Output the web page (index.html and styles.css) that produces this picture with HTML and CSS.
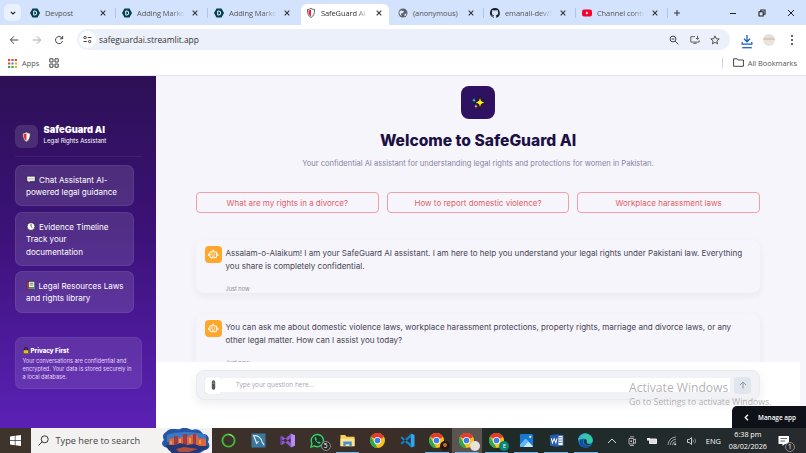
FILE: index.html
```html
<!DOCTYPE html>
<html lang="en">
<head>
  <meta charset="UTF-8">
  <meta name="viewport" content="width=device-width, initial-scale=1.0">
  <title>SafeGuard AI</title>
  <link rel="stylesheet" href="styles.css">
</head>
<body>
  <!-- shared icons -->
  <svg class="defs" width="0" height="0">
    <symbol id="close" viewBox="0 0 6 6"><path d="M.7.7l4.6 4.6M5.3.7L.7 5.3" fill="none" stroke="#333" stroke-width="1.1"/></symbol>
    <symbol id="devpost" viewBox="0 0 20 20"><path d="M5 1h10l5 9-5 9H5l-5-9z" fill="#003e54"/><path d="M7.500 6h2a4 4 0 0 1 0 8h-2z" fill="none" stroke="#fff" stroke-width="2"/></symbol>
    <symbol id="shield" viewBox="0 0 20 24"><path d="M10 1c3 2 5 2.500 8.500 2.500 0 10-1.500 15-8.500 19.500C3 18.500 1.500 13.500 1.500 3.500 5 3.500 7 3 10 1z" fill="#fff" stroke="#333" stroke-width="1.800"/><path d="M10 3.500C8 5 6 5.500 3.800 5.500c0 8 1.200 11.500 6.200 15z" fill="#e8283e"/></symbol>
    <symbol id="bot" viewBox="0 0 16 16"><g fill="none" stroke="#fff" stroke-width="1"><rect x="4.700" y="5.500" width="6.600" height="5.800" rx="1.600"/><path d="M8 5.300V4.200M3.500 7.600v2M12.500 7.600v2M6.700 9.800h2.600"/></g><g fill="#fff"><circle cx="6.700" cy="7.800" r=".7"/><circle cx="9.300" cy="7.800" r=".7"/><circle cx="8" cy="4.200" r=".8"/></g></symbol>
    <symbol id="chrome" viewBox="0 0 24 24"><circle cx="12" cy="12" r="12" fill="#fbc116"/><path d="M12 12L1.600 6A12 12 0 0 1 22.400 6z" fill="#e33b2e"/><path d="M1.600 6L7 15l5 9A12 12 0 0 1 1.600 6z" fill="#2da94f"/><path d="M12 6h10.400L12 12z" fill="#e33b2e"/><circle cx="12" cy="12" r="5.800" fill="#fff"/><circle cx="12" cy="12" r="4.500" fill="#3b7ded"/></symbol>
  </svg>

  <!-- tab strip -->
  <div class="tabstrip">
    <div class="tab-search"><svg width="6" height="4" viewBox="0 0 6 4"><path d="M.8.8L3 3 5.200.8" fill="none" stroke="#222" stroke-width="1.100"/></svg></div>
    <div class="tab line"><svg class="fav"><use href="#devpost"/></svg><span class="tab-title">Devpost</span><svg class="x"><use href="#close"/></svg></div>
    <div class="tab line"><svg class="fav"><use href="#devpost"/></svg><span class="tab-title fade">Adding Marko</span><svg class="x"><use href="#close"/></svg></div>
    <div class="tab"><svg class="fav"><use href="#devpost"/></svg><span class="tab-title fade">Adding Marko</span><svg class="x"><use href="#close"/></svg></div>
    <div class="tab active"><svg class="fav"><use href="#shield"/></svg><span class="tab-title fade">SafeGuard AI</span><svg class="x"><use href="#close"/></svg></div>
    <div class="tab line"><svg class="fav" viewBox="0 0 20 20"><circle cx="10" cy="10" r="9" fill="#5f6368"/><path d="M3 7c4-4 6 0 9-1l-2 4-4 1 1 5c-3-2-5-5-4-9zM13 12l4-1c0 3-2 5-4 6z" fill="#dce7f8"/></svg><span class="tab-title">(anonymous)</span><svg class="x"><use href="#close"/></svg></div>
    <div class="tab line"><svg class="fav" viewBox="0 0 16 16"><path fill="#1b1f23" d="M8 0a8 8 0 0 0-2.500 15.600c.4.100.5-.2.500-.4v-1.500c-2.200.5-2.700-1-2.700-1-.4-.9-.9-1.200-.9-1.200-.7-.5.100-.5.100-.5.800.1 1.200.8 1.200.8.700 1.200 1.900.9 2.300.7.100-.5.300-.9.500-1.100-1.800-.2-3.600-.9-3.600-4 0-.8.300-1.500.8-2.100-.1-.2-.4-1 .1-2.100 0 0 .7-.2 2.200.8a7.500 7.500 0 0 1 4 0c1.500-1 2.200-.8 2.200-.8.400 1.100.2 1.900.1 2.100.5.600.8 1.300.8 2.100 0 3.100-1.900 3.800-3.600 4 .3.300.5.700.5 1.500v2.200c0 .2.100.5.500.4A8 8 0 0 0 8 0z"/></svg><span class="tab-title fade">emanali-dev/S</span><svg class="x"><use href="#close"/></svg></div>
    <div class="tab line"><svg class="fav" viewBox="0 0 20 20"><rect y="3" width="20" height="14" rx="4" fill="#f5002f"/><path d="M8 7l5 3-5 3z" fill="#fff"/></svg><span class="tab-title fade">Channel conte</span><svg class="x"><use href="#close"/></svg></div>
    <svg class="new-tab" viewBox="0 0 8 8"><path d="M4 1v6M1 4h6" stroke="#333" stroke-width="1"/></svg>
    <div class="win-buttons">
      <svg width="8" height="8" viewBox="0 0 8 8"><path d="M1 4.500h6" stroke="#222"/></svg>
      <svg width="8" height="8" viewBox="0 0 8 8"><path d="M1 2.800h4.200V7H1zM2.800 2.500V1H7v4.300H5.500" fill="none" stroke="#222" stroke-width="1.100"/></svg>
      <svg width="8" height="8" viewBox="0 0 8 8"><path d="M1 1l6 6M7 1L1 7" stroke="#222"/></svg>
    </div>
  </div>

  <!-- address bar -->
  <div class="toolbar">
    <svg class="nav" viewBox="0 0 10 10"><path d="M9.200 5H1.500M5 1.300L1.300 5 5 8.700" fill="none" stroke="#444"/></svg>
    <svg class="nav" viewBox="0 0 10 10"><path d="M.8 5h7.700M5 1.300L8.700 5 5 8.700" fill="none" stroke="#aaa"/></svg>
    <svg class="nav" viewBox="0 0 10 10"><path d="M8.400 3.600A3.600 3.600 0 1 0 8.600 6M8.700 1v2.800H5.900" fill="none" stroke="#444"/></svg>
    <div class="omnibox">
      <span class="site-info"><svg width="9" height="9" viewBox="0 0 9 9"><g fill="none" stroke="#444" stroke-width="1"><circle cx="2" cy="2.500" r="1.200"/><path d="M4.700 2.500h3.800M.5 6.500h3.300"/><circle cx="6.700" cy="6.500" r="1.200"/></g></svg></span>
      <span class="url">safeguardai.streamlit.app</span>
      <svg viewBox="0 0 10 10"><g fill="none" stroke="#444"><circle cx="4" cy="4" r="2.900"/><path d="M6.200 6.200L9.400 9.400M2.700 4h2.600"/></g></svg>
      <svg viewBox="0 0 12 10"><path d="M6 1H1v6.500h10V5.500M4 9h4M9 0v4M7.200 2.600L9 4.300l1.800-1.700" fill="none" stroke="#444"/></svg>
      <svg viewBox="0 0 10 10"><path d="M5 .9l1.200 2.800 3 .2-2.300 2 .7 3L5 7.300 2.400 8.900l.7-3-2.300-2 3-.2z" fill="none" stroke="#444" stroke-width=".9"/></svg>
    </div>
    <svg class="download" viewBox="0 0 11 14"><path d="M5.500 1v6M2.700 4.500l2.800 2.800 2.800-2.800M1 7.500v2h9v-2" fill="none" stroke="#1b5fc4" stroke-width="1.200"/><path d="M1 12.800h9" stroke="#1b5fc4" stroke-width="1.200"/></svg>
    <div class="profile"></div>
    <svg class="dots" viewBox="0 0 4 12"><g fill="#333"><circle cx="2" cy="2" r="1"/><circle cx="2" cy="6" r="1"/><circle cx="2" cy="10" r="1"/></g></svg>
  </div>

  <div class="bookmarks">
    <svg width="9" height="9" viewBox="0 0 9 9"><path d="M0 1h2.200M0 4.500h2.200" stroke="#e04838" stroke-width="2"/><path d="M3.400 1h2.200M6.800 1H9" stroke="#e04838" stroke-width="2"/><path d="M0 8h2.200M3.400 8h2.200" stroke="#34a853" stroke-width="2"/><path d="M3.400 4.500h2.200" stroke="#4285f4" stroke-width="2"/><path d="M6.800 4.500H9M6.800 8H9" stroke="#f4b400" stroke-width="2"/></svg>
    <span class="apps">Apps</span>
    <svg width="10" height="10" viewBox="0 0 10 10"><path d="M.8.8H4V4H.8zM6 .8h3.200V4H6zM.8 6H4v3.200H.8zM6 6h3.200v3.200H6z" fill="none" stroke="#444"/></svg>
    <div class="all">
      <svg width="11" height="9" viewBox="0 0 11 9"><path d="M.6.8h3.600l1 1.200h5.200v6.300H.6z" fill="none" stroke="#444"/></svg>
      <span>All Bookmarks</span>
    </div>
  </div>

  <div class="app">
    <aside class="sidebar">
      <div class="brand">
        <div class="brand-icon"><svg width="9" height="12"><use href="#shield"/></svg></div>
        <div>
          <div class="brand-name">SafeGuard AI</div>
          <div class="brand-sub">Legal Rights Assistant</div>
        </div>
      </div>
      <nav class="menu">
        <div class="menu-item"><svg class="emoji" viewBox="0 0 10 10"><path d="M.5 1.500h9v5.500H4L2 9V7H.5z" fill="#fff" stroke="#222" stroke-width=".6"/><path d="M2.400 4.300h1M4.500 4.300h1M6.600 4.300h1" stroke="#222"/></svg>Chat Assistant AI-<br>powered legal guidance</div>
        <div class="menu-item"><svg class="emoji" viewBox="0 0 10 10"><circle cx="5" cy="5" r="4.300" fill="#fff" stroke="#222" stroke-width=".7"/><path d="M5 2v3l1.500 1.200" fill="none" stroke="#222" stroke-width=".8"/></svg>Evidence Timeline<br>Track your<br>documentation</div>
        <div class="menu-item"><svg class="emoji books" viewBox="0 0 10 10"><rect x=".6" y="1" width="3" height="8.400" fill="#e0443a" stroke="#222" stroke-width=".5"/><rect x="2.500" y=".6" width="6.500" height="6.500" fill="#f3f3e6" stroke="#222" stroke-width=".5"/><path d="M3.500 2.500h4M3.500 4.500h4" stroke="#3a8c50"/><path d="M3 8h6.500" stroke="#49a85c" stroke-width="1.800"/></svg>Legal Resources Laws<br>and rights library</div>
      </nav>
      <div class="privacy">
        <div class="privacy-title"><svg width="6" height="7" viewBox="0 0 6 7"><path d="M1.500 3V1.800a1.500 1.500 0 0 1 3 0V3" fill="none" stroke="#222"/><rect x=".4" y="3" width="5.200" height="3.700" fill="#f7b928" stroke="#222" stroke-width=".4"/></svg>Privacy First</div>
        <p>Your conversations are confidential and<br>encrypted. Your data is stored securely in<br>a local database.</p>
      </div>
    </aside>

    <main class="main">
      <div class="scroll">
        <div class="hero">
          <div class="hero-icon"><svg width="15" height="15" viewBox="0 0 15 15"><path d="M9 .8l1.300 4.900 4 1.800-4 1.800L9 14.200 7.700 9.300l-4-1.800 4-1.800z" fill="#ffef21" stroke="#111" stroke-width=".9"/><path d="M3 2.500l.8 2 1.700.8-1.700.8-.8 2-.8-2L.5 5.300l1.700-.8z" fill="#35c1f1" stroke="#111" stroke-width=".5"/><path d="M5 8.800l.8 1.700 1.400.7-1.400.7-.8 1.800-.8-1.800-1.400-.7 1.400-.7z" fill="#f59aaa" stroke="#111" stroke-width=".5"/></svg></div>
          <h1>Welcome to SafeGuard AI</h1>
          <p>Your confidential AI assistant for understanding legal rights and protections for women in Pakistan.</p>
        </div>
        <div class="prompts">
          <button>What are my rights in a divorce?</button>
          <button>How to report domestic violence?</button>
          <button>Workplace harassment laws</button>
        </div>
        <div class="message">
          <svg class="avatar" viewBox="0 0 16 16"><use href="#bot"/></svg>
          <div class="text">Assalam-o-Alaikum! I am your SafeGuard AI assistant. I am here to help you understand your legal rights under Pakistani law. Everything<br>you share is completely confidential.<div class="time">Just now</div></div>
        </div>
        <div class="message">
          <svg class="avatar" viewBox="0 0 16 16"><use href="#bot"/></svg>
          <div class="text">You can ask me about domestic violence laws, workplace harassment protections, property rights, marriage and divorce laws, or any<br>other legal matter. How can I assist you today?<div class="time">Just now</div></div>
        </div>
      </div>
      <div class="bottom">
        <div class="chat-input">
          <div class="mic"><svg width="5" height="10" viewBox="0 0 5 10"><rect x=".8" y=".3" width="3.400" height="9.400" rx="1.600" fill="#555"/><path d="M1.500 2h2M1.500 3.500h2" stroke="#aaa" stroke-width=".6"/></svg></div>
          <div class="field">Type your question here...</div>
          <div class="send"><svg width="8" height="8" viewBox="0 0 8 8"><path d="M4 7.500V1M1 4l3-3 3 3" fill="none" stroke="#8f93a5" stroke-width="1"/></svg></div>
        </div>
      </div>
    </main>
    <div class="manage"><svg width="5" height="7" viewBox="0 0 5 7"><path d="M4 .7L1.200 3.500 4 6.300" fill="none" stroke="#fff" stroke-width="1.300"/></svg><span>Manage app</span></div>
    <div class="activate"><div class="activate-title">Activate Windows</div><div class="activate-sub">Go to Settings to activate Windows.</div></div>
  </div>

  <div class="taskbar">
    <div class="start"><svg width="11" height="11" viewBox="0 0 11 11"><path d="M0 1.500l4.800-.7v4.400H0zM5.500.7L11 0v5.200H5.500zM0 5.900h4.800v4.400L0 9.600zM5.500 5.900H11V11l-5.500-.7z" fill="#fff"/></svg></div>
    <div class="search">
      <svg width="11" height="11" viewBox="0 0 11 11"><g fill="none" stroke="#333"><circle cx="6.700" cy="4.300" r="3.500"/><path d="M4.200 6.800L.6 10.400"/></g></svg>
      <span>Type here to search</span>
      <svg class="city" width="50" height="25" viewBox="0 0 50 25"><path d="M4 4C8-1 14 2 18 1c5-3 9 0 12 1 6-2 9 1 11 4 5 0 7 4 5 8 3 4 1 7-3 8l-5 3H10l-4-5c-7-1-7-6-4-8-2-4-1-6 2-8z" fill="#2456a5"/><path d="M5 7c8-4 30-4 39 0v7H5z" fill="#3d78c4"/><path d="M7 11l5-1V8h4v2l5-1V6h4v3l6-3v3l5-2v3l8 1v8H7z" fill="#d9673c"/><path d="M12 8h4v9h-4zM21 6h4v11h-4zM31 6h3v11h-3z" fill="#963d4c"/><path d="M4 17h10l4-2 7 2 7-1 6 2h8c0 3-3 4-6 4l-4 3H10c-2-2-6-5-6-8z" fill="#233675"/><path d="M14 21l8-2 14 2-9 3H17z" fill="#b04e40"/><path d="M9 13v3M18 11v4M28 10v5M38 12v4" stroke="#f0a868" stroke-width="1.500"/></svg>
    </div>
    <div class="task"><svg viewBox="0 0 16 16"><circle cx="8" cy="8" r="6.500" fill="none" stroke="#43b836" stroke-width="2"/><path d="M8 1.500a6.500 6.500 0 0 1 5 3" fill="none" stroke="#a8e68c" stroke-width="1"/></svg></div>
    <div class="task"><svg viewBox="0 0 16 16"><rect x=".5" y=".5" width="15" height="15" fill="#3a789f"/><path d="M2 3c5-1 9 2 10 7l2 3M3 3l3 8 2-2" fill="none" stroke="#d8eaf4" stroke-width="1.300"/></svg></div>
    <div class="task"><svg viewBox="0 0 16 16"><path d="M11.500.5L16 2.500v11l-4.500 2z" fill="#b88cf0"/><path d="M.5 4L2 3l10 8v4.500L.5 5.500zM.5 12L2 13l10-8V.500L.5 10.500z" fill="#8d58d2"/><path d="M.3 4v8L2 13V3z" fill="#6d3bb0"/></svg></div>
    <div class="task"><svg viewBox="0 0 16 16"><path d="M1 15l1-4a6.500 6.500 0 1 1 2.700 2.800z" fill="#263129" stroke="#35d366" stroke-width="1.500"/><path d="M5.500 4.500c-2 2 2.500 7 5 7l1-1.500-2-1-1 .8-2-2 .7-1L6.500 4.500z" fill="#35d366"/></svg><span class="badge">5</span></div>
    <div class="task open"><svg viewBox="0 0 16 16"><path d="M.5 2h5l1.500 2h8.500v10H.5z" fill="#f8cf57"/><path d="M.5 6h15v8H.5z" fill="#ffe391"/><path d="M3.500 14V9h9v5h-2.500v-2H6v2z" fill="#4394cc"/></svg></div>
    <div class="task"><svg><use href="#chrome"/></svg></div>
    <div class="task"><svg viewBox="0 0 16 16"><path d="M11.500.5L15.500 2v12l-4 1.500z" fill="#31a7ef"/><path d="M.5 5L2 3.800l10 8v3.700zM.5 11L2 12.200l10-8V.5z" fill="#1284cb"/></svg></div>
    <div class="task open"><svg><use href="#chrome"/></svg><span class="badge person"></span></div>
    <div class="task open current"><svg><use href="#chrome"/></svg><span class="badge pale"></span></div>
    <div class="task open"><svg><use href="#chrome"/></svg><span class="badge teal">E</span></div>
    <div class="task open"><svg viewBox="0 0 16 16"><rect x="1" y="1" width="14" height="14" rx="1.500" fill="#1978d4"/><path d="M1 13l6-7 8 8-1 1H2z" fill="#c6e8ff"/><path d="M1 13l6-7 3 3-5 6H2z" fill="#62b7f5"/><circle cx="12" cy="4" r="1.200" fill="#fff"/></svg></div>
    <div class="task open"><svg viewBox="0 0 16 16"><rect x="7" y="2.500" width="8" height="11" fill="#fff" stroke="#295aa8"/><path d="M10 5h4M10 7.500h4M10 10h4" stroke="#295aa8" stroke-width=".8"/><path d="M1 2.500L10 1v14l-9-1.500z" fill="#2459ad"/><path d="M2.500 5.700l1.200 4.800 1.800-4.500 1.800 4.500 1.200-4.800" fill="none" stroke="#fff" stroke-width="1.100"/></svg></div>
    <div class="task open"><svg viewBox="0 0 16 16"><circle cx="8" cy="8" r="7.800" fill="#1677cc"/><path d="M.3 7A7.800 7.800 0 0 1 15.800 8c0 4-5 4-6.500 2.500 1.500-3-1-5-4-4.500-2 .2-4 .5-5 2z" fill="#39c6a4"/><path d="M.3 7A7.800 7.800 0 0 1 8 .2C4 3 3 5 .3 7z" fill="#36a8e0"/><path d="M6 7c-3 4 1 8 7 6-5 5-12 1-11-4 .5-2 2-3 4-2z" fill="#0d4f9c"/><path d="M7 7c3 0 2 2 2 3.500 1 1.500 3 2 5 1-1 2-7 2-7.500-1.500C6.300 9 6.300 8 7 7z" fill="#26323a"/></svg></div>
    <div class="tray">
      <svg viewBox="0 0 10 10"><path d="M1 7l4-4 4 4" fill="none" stroke="#ddd"/></svg>
      <svg viewBox="0 0 10 10"><path d="M3 .8h4M3 9.500h4M2 2.500h4.500v5.500H2zM6.500 4l2-1v4.500l-2-1" fill="none" stroke="#ccc" stroke-width=".8"/><circle cx="4.200" cy="5.200" r=".9" fill="#ccc"/></svg>
      <svg viewBox="0 0 10 10"><path d="M2.500 3h7v4.500h-7z" fill="#ddd" stroke="#eee"/><path d="M0 2h3v2.500H0z" fill="#eee"/></svg>
      <svg viewBox="0 0 10 10"><path d="M1 9a8 8 0 0 1 8-8M3.300 9A5.700 5.700 0 0 1 9 3.300M5.600 9A3.400 3.400 0 0 1 9 5.600" fill="none" stroke="#aaa" stroke-width=".9"/><circle cx="8.200" cy="8.300" r="1" fill="#ddd"/></svg>
      <svg viewBox="0 0 10 10"><path d="M.5 3.500h1.700L4.500 1.500v7L2.200 6.500H.5z" fill="none" stroke="#ddd" stroke-width=".9"/><path d="M6 3.500q1 1.500 0 3M7.800 2.500q1.500 2.500 0 5" fill="none" stroke="#999" stroke-width=".8"/></svg>
    </div>
    <span class="lang">ENG</span>
    <div class="clock"><div>6:38 pm</div><div>08/02/2026</div></div>
    <div class="notify"><svg width="12" height="12" viewBox="0 0 12 12"><path d="M.5 1h10.500v8H7L4.500 11V9h-4z" fill="#fff"/><path d="M2.500 3.500H9M2.500 6H7" stroke="#444" stroke-width=".8"/></svg><span class="badge">1</span></div>
  </div>
</body>
</html>
```
FILE: styles.css
```css
* { box-sizing: border-box; }
body {
  margin: 0;
  width: 806px;
  height: 453px;
  overflow: hidden;
  display: flex;
  flex-direction: column;
  font-family: Inter, "Liberation Sans", sans-serif;
  background: #fff;
}
svg { flex: none; display: block; }
.defs { position: absolute; }

/* browser */
.tabstrip, .toolbar, .bookmarks {
  display: flex;
  align-items: center;
  flex: none;
  font-family: "Open Sans", "Noto Sans", sans-serif;
  color: #555;
}
.tabstrip {
  height: 25px;
  background: #d3e2fd;
  padding-left: 4px;
}
.tab-search {
  width: 17px;
  height: 17px;
  border-radius: 5px;
  background: #e9f1fe;
  display: flex;
  align-items: center;
  justify-content: center;
  margin-right: 3px;
}
.tab {
  width: 92px;
  height: 25px;
  padding: 1px 10px 0 6px;
  display: flex;
  align-items: center;
  position: relative;
}
.tab.line::after {
  content: "";
  position: absolute;
  right: 0;
  top: 8px;
  width: 1px;
  height: 10px;
  background: #a9c7f7;
}
.tab.active::before {
  content: "";
  position: absolute;
  z-index: 0;
  left: 1px;
  right: 3px;
  top: 4px;
  bottom: 0;
  background: #fff;
  border-radius: 6px 6px 0 0;
}
.tab > * { position: relative; }
.fav { width: 10px; height: 10px; }
.tab-title {
  font-size: 7.500px;
  line-height: 12px;
  letter-spacing: -0.1px;
  margin-left: 5px;
  width: 49px;
  white-space: nowrap;
}
.active .tab-title { color: #333; }
.fade {
  -webkit-mask-image: linear-gradient(to right, #000 70%, transparent 98%);
  mask-image: linear-gradient(to right, #000 70%, transparent 98%);
}
.x { width: 6px; height: 6px; margin-left: auto; }
.new-tab { width: 8px; height: 8px; margin-left: 5px; }
.win-buttons {
  display: flex;
  gap: 21px;
  margin-left: auto;
  padding-right: 11px;
}
.toolbar {
  height: 29px;
  padding: 0 12px 0 9px;
}
.nav { width: 10px; height: 10px; margin-right: 12.500px; }
.omnibox {
  width: 653.500px;
  height: 21px;
  border-radius: 11px;
  background: #ebf0fa;
  display: flex;
  align-items: center;
  gap: 10.500px;
  padding: 0 10px 0 2px;
}
.omnibox svg { width: 10px; height: 10px; }
.site-info {
  width: 17px;
  height: 17px;
  border-radius: 50%;
  background: #fff;
  display: flex;
  align-items: center;
  justify-content: center;
}
.site-info svg { width: 9px; height: 9px; }
.url {
  font-size: 8.400px;
  color: #333;
  margin-left: -7px;
  flex: 1;
}
.download { width: 12px; height: 15px; margin-left: 11px; margin-top: 3px; }
.profile {
  width: 12px;
  height: 12px;
  border-radius: 50%;
  background: linear-gradient(#e4e0d8 35%, #ddc6ca 36% 50%, #e9e6d9 51%);
  margin-left: auto;
}
.dots { width: 4px; height: 12px; margin-left: 15px; }
.bookmarks {
  height: 22px;
  padding: 0 9px 4px 8px;
  border-bottom: 1px solid #e6e8ee;
  font-size: 7.400px;
}
.apps { width: 17px; margin: 0 10px 0 5px; white-space: nowrap; }
.bookmarks > svg { margin-top: 1px; }
.all {
  margin-left: auto;
  display: flex;
  align-items: center;
  gap: 4px;
  border-left: 1px solid #c5d8f8;
  padding-left: 10px;
  height: 10px;
}

/* app */
.app {
  height: 352px;
  flex: none;
  display: flex;
  position: relative;
}
.sidebar {
  width: 156px;
  background: linear-gradient(#2d1055, #3b1278 45%, #5b21b6);
  color: #fff;
  padding: 47px 14.500px 0;
}
.brand {
  display: flex;
  gap: 6px;
  height: 34px;
  border-bottom: 1px solid rgba(255, 255, 255, 0.06);
}
.brand-icon {
  width: 23px;
  height: 23px;
  border-radius: 6px;
  background: rgba(255, 255, 255, 0.12);
  display: flex;
  align-items: center;
  justify-content: center;
  margin-top: 2px;
}
.brand-name {
  font-size: 9.300px;
  font-weight: 900;
  line-height: 12px;
  margin-top: 1px;
}
.brand-sub {
  font-size: 6.050px;
  line-height: 8px;
  margin-top: 1px;
}
.menu {
  display: grid;
  gap: 5.500px;
  padding-top: 8px;
}
.menu-item {
  width: 119px;
  border: 1px solid rgba(255, 255, 255, 0.07);
  background: rgba(255, 255, 255, 0.12);
  border-radius: 7px;
  padding: 7.700px 0 6.700px 10.500px;
  font-size: 8.050px;
  line-height: 12.500px;
  white-space: nowrap;
}
.emoji {
  width: 10px;
  height: 9px;
  display: inline-block;
  vertical-align: -1.500px;
  margin-right: 3px;
}
.books { margin-right: 2.500px; }
.privacy {
  margin-top: 24.500px;
  width: 127px;
  height: 52px;
  border-radius: 7px;
  border: 1px solid rgba(255, 255, 255, 0.06);
  background: rgba(255, 255, 255, 0.1);
  padding: 8px 7px;
}
.privacy-title {
  display: flex;
  align-items: center;
  gap: 2px;
  font-size: 6.200px;
  font-weight: 800;
  line-height: 9px;
}
.privacy p {
  margin: 2px 0 0;
  font-size: 5.550px;
  line-height: 8px;
  white-space: nowrap;
  color: #e3d6f7;
}
.main { width: 650px; background: #f6f5fb; }
.scroll {
  height: 286px;
  overflow: hidden;
  padding: 10px 46px 0 40px;
}
.hero { text-align: center; }
.hero-icon {
  width: 34px;
  height: 33px;
  margin: 0 auto;
  border-radius: 8px;
  background: #2e1160;
  display: flex;
  align-items: center;
  justify-content: center;
}
.hero h1 {
  margin: 12px 0 0;
  font-size: 15.600px;
  line-height: 20px;
  font-weight: 850;
  color: #1c1044;
}
.hero p {
  margin: 8px 0 0;
  font-size: 7.550px;
  line-height: 10px;
  color: #8782a5;
}
.prompts {
  display: grid;
  grid-template-columns: repeat(3, 1fr);
  gap: 8px;
  margin: 23px 0 27px;
}
.prompts button {
  height: 21px;
  padding: 0;
  border: 1px solid #f0a0a8;
  border-radius: 4px;
  background: transparent;
  font: 8px Inter, sans-serif;
  color: #e45c67;
}
.message {
  height: 53px;
  margin-bottom: 21px;
  padding: 6px 9px 0;
  border-radius: 8px;
  box-shadow: 0 3px 8px rgba(40, 30, 80, 0.06);
  display: flex;
  gap: 4px;
}
.avatar {
  width: 16.500px;
  height: 16.500px;
  border-radius: 4px;
  background: #ffa62b;
}
.text {
  padding-top: 1px;
  font-size: 8.060px;
  line-height: 12.900px;
  color: #484454;
  white-space: nowrap;
}
.time {
  font-size: 5.600px;
  line-height: 8px;
  margin-top: 12px;
  color: #8c8998;
}
.bottom {
  width: 644px;
  height: 66px;
  background: #fff;
  padding: 8px 40px 0;
}
.chat-input {
  height: 30px;
  border-radius: 8px;
  border: 1px solid #e9ebf1;
  background: #f0f2f6;
  box-shadow: 0 4px 10px rgba(40, 30, 80, 0.08);
  display: flex;
  align-items: center;
  padding: 0 8px;
}
.mic, .send {
  width: 17px;
  height: 17px;
  border-radius: 4px;
  display: flex;
  align-items: center;
  justify-content: center;
}
.mic { background: #fff; box-shadow: 0 0 1px #ccc; }
.send { background: #e0e5ee; margin-left: 4px; }
.field {
  flex: 1;
  height: 14px;
  line-height: 14px;
  background: #fff;
  padding-left: 14px;
  font-family: "Open Sans", sans-serif;
  font-size: 6.400px;
  color: #aaa2b8;
}
.manage {
  position: absolute;
  right: 0;
  bottom: 0;
  width: 74px;
  height: 22px;
  border-radius: 5px 0 0 0;
  background: #0e1117;
  color: #fff;
  display: flex;
  align-items: center;
  gap: 9px;
  padding-left: 12px;
  font: 600 6.400px "Open Sans", sans-serif;
}
.activate {
  position: absolute;
  left: 629px;
  top: 304px;
  color: rgba(125, 125, 130, 0.6);
  font-family: "Open Sans", sans-serif;
  white-space: nowrap;
}
.activate-title { font-size: 12.100px; line-height: 16px; }
.activate-sub { font-size: 8.700px; line-height: 13px; }

/* taskbar */
.taskbar {
  height: 25px;
  flex: none;
  display: flex;
  align-items: center;
  background: linear-gradient(to right, #3e342b, #3b2e29 50%, #1f2b28 62%, #202b2b 80%, #282a2e);
  color: #fff;
  font-family: "Open Sans", sans-serif;
}
.start { width: 30.500px; padding-left: 10px; }
.search {
  width: 181px;
  height: 25px;
  background: #f3f2f1;
  display: flex;
  align-items: center;
  padding-left: 7px;
  color: #444;
  font-size: 9.200px;
}
.search span { margin-left: 7px; white-space: nowrap; }
.city { margin-left: auto; }
.task {
  width: 29.800px;
  height: 25px;
  display: flex;
  align-items: center;
  justify-content: center;
  position: relative;
}
.task:nth-child(3) { margin-left: 2px; }
.task > svg { width: 15px; height: 15px; }
.open::after {
  content: "";
  position: absolute;
  left: 3px;
  right: 3px;
  bottom: 0;
  height: 1.500px;
  background: #76b9ed;
}
.current { background: #5b5450; }
.badge {
  position: absolute;
  right: 2px;
  bottom: 2px;
  width: 10px;
  height: 10px;
  border: 1px solid #888;
  border-radius: 50%;
  background: #2d2d2d;
  color: #fff;
  font-size: 6.500px;
  line-height: 8px;
  text-align: center;
}
.badge.person { background: radial-gradient(circle at 50% 40%, #b26a35 25%, #2b1712 28%); border: 0; }
.badge.pale { background: #e8e2df; border: 0; }
.badge.teal { background: #0b8577; border: 0; line-height: 10px; font-size: 6px; }
.tray {
  display: flex;
  gap: 10px;
  margin-left: 6px;
}
.tray svg { width: 10px; height: 10px; }
.lang { width: 15px; font-size: 7.400px; margin-left: 9px; }
.clock {
  font-size: 7.200px;
  line-height: 11.500px;
  text-align: center;
  width: 44px;
  margin-left: 5px;
  white-space: nowrap;
}
.notify { position: relative; margin-left: 8px; }
.notify .badge { right: -5px; bottom: -5px; }
```
